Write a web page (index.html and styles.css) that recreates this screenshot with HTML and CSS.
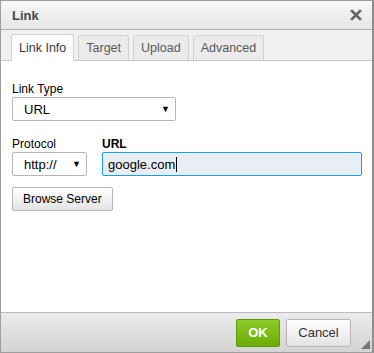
FILE: index.html
```html
<!DOCTYPE html>
<html lang="en">
<head>
    <meta charset="UTF-8">
    <title>Link</title>
    <link rel="stylesheet" href="styles.css">
</head>
<body>
    <div class="dialog">
        <div class="title-bar">
            <span class="title">Link</span>
            <svg class="close" width="12" height="12" viewBox="0 0 12 12"><path d="M2 2 L10 10 M10 2 L2 10" stroke="#666" stroke-width="2.6" stroke-linecap="square"/></svg>
        </div>

        <div class="tabs">
            <span class="tab active">Link Info</span>
            <span class="tab">Target</span>
            <span class="tab">Upload</span>
            <span class="tab">Advanced</span>
        </div>

        <div class="content">
            <div class="field link-type">
                <label>Link Type</label>
                <div class="select wide"><span>URL</span><span class="arrow">&#9660;</span></div>
            </div>

            <div class="row">
                <div class="field">
                    <label>Protocol</label>
                    <div class="select narrow"><span>http://</span><span class="arrow">&#9660;</span></div>
                </div>
                <div class="field grow">
                    <label class="bold">URL</label>
                    <div class="text-input">google.com<span class="caret"></span></div>
                </div>
            </div>

            <button class="btn">Browse Server</button>
        </div>

        <div class="footer">
            <button class="btn ok">OK</button>
            <button class="btn cancel">Cancel</button>
            <span class="grip"></span>
        </div>
    </div>
</body>
</html>
```

FILE: styles.css
```css
* { box-sizing: border-box; }
body { margin: 0; font-family: "Liberation Sans", Arial, sans-serif; font-size: 12px; color: #000; }

.dialog { width: 374px; height: 353px; border: 1px solid #9d9d9d; border-right: 2px solid #8f8f8f; display: flex; flex-direction: column; background: #fff; }

.title-bar { height: 29px; display: flex; align-items: center; justify-content: space-between; padding: 0 10px 0 11px; background: linear-gradient(#f8f8f8, #e6e6e6); border-bottom: 1px solid #b0b0b0; }
.title { font-size: 13px; font-weight: bold; color: #474747; }

.tabs { height: 31px; display: flex; align-items: flex-end; gap: 4px; padding: 0 0 0 10px; background: #f0f0f0; border-bottom: 1px solid #c7c7c7; }
.tab { height: 26px; margin-bottom: -1px; padding: 0 7px; display: flex; align-items: center; font-size: 12.5px; color: #595959; background: #ebebeb; border: 1px solid #d1d1d1; border-bottom: 1px solid #c7c7c7; border-radius: 3px 3px 0 0; }
.tab.active { height: 27px; background: #fff; color: #383838; border-color: #d1d1d1; border-bottom-color: #fff; }

.content { flex: 1; padding: 21px 10px 0 11px; }
.field { display: flex; flex-direction: column; }
.field label { margin-bottom: 1px; line-height: 14px; }
.field label.bold { font-weight: bold; }
.link-type { margin-bottom: 16px; }
.row { display: flex; gap: 15px; margin-bottom: 11px; }
.grow { flex: 1; }

.select { height: 24px; display: flex; align-items: center; justify-content: space-between; padding: 0 5px 0 11px; border: 1px solid #b6b6b6; border-radius: 2px; background: #fff; font-size: 13px; }
.select.wide { width: 164px; }
.select.narrow { width: 75px; }
.arrow { font-size: 9px; }

.text-input { height: 24px; display: flex; align-items: center; padding: 0 5px; border: 1px solid #139ff7; border-radius: 2px; background: #e9edf5; font-size: 13px; }
.caret { width: 1px; height: 15px; background: #000; margin-left: 1px; }

.btn { height: 24px; padding: 0 10px; font-family: inherit; font-size: 12px; color: #000; background: linear-gradient(#fff, #e4e4e4); border: 1px solid #b6b6b6; border-radius: 2px; }

.footer { position: relative; height: 40px; display: flex; align-items: center; justify-content: flex-end; gap: 6px; padding: 0 21px 0 0; background: linear-gradient(#ebebeb, #d4d4d4); border-top: 1px solid #bcbcbc; }
.footer .btn { height: 28px; }
.ok { width: 44px; padding: 0; color: #fff; font-weight: bold; font-size: 13px; background: linear-gradient(#8dcc29, #6aac04); border-color: #5a9c0a; }
.cancel { width: 65px; padding: 0; font-size: 13px; color: #333; }
.grip { position: absolute; right: 2px; bottom: 3px; width: 0; height: 0; border-left: 9px solid transparent; border-bottom: 9px solid #767676; }
```
